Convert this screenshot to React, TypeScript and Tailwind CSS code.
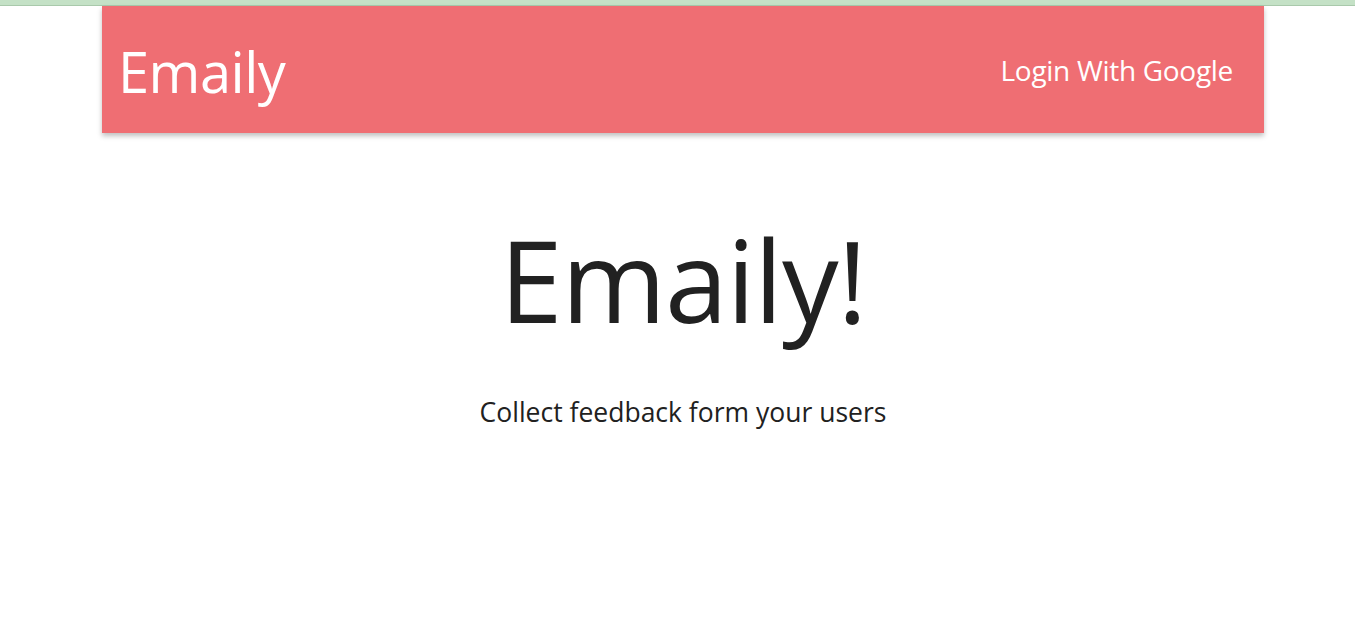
import React from 'react';

const font = { fontFamily: '"Open Sans", "Noto Sans", sans-serif' };

const App = () => {
  return (
    <div className="min-h-screen bg-white" style={font}>
      <div className="h-[6px] bg-[#c4e1c6] border-b border-[#a9c9ab]" />
      <div className="ml-[102px] w-[1162px]">
        <nav className="h-[127px] bg-[#ef6e73] shadow-[0_3px_5px_rgba(0,0,0,0.25)] flex items-center justify-between pl-[16px] pr-[31px]">
          <a href="#" className="text-white text-[56px] leading-none tracking-[-0.5px] mt-[3px]">
            Emaily
          </a>
          <ul className="flex">
            <li>
              <a href="#" className="text-white text-[28px] tracking-[-0.3px]">
                Login With Google
              </a>
            </li>
          </ul>
        </nav>
        <div className="text-center text-[#212121] pt-[84px]">
          <h1 className="text-[113px] leading-[1.1] tracking-[-1px]">Emaily!</h1>
          <p className="text-[26.5px] mt-[52px]">Collect feedback form your users</p>
        </div>
      </div>
    </div>
  );
};

export default App;
